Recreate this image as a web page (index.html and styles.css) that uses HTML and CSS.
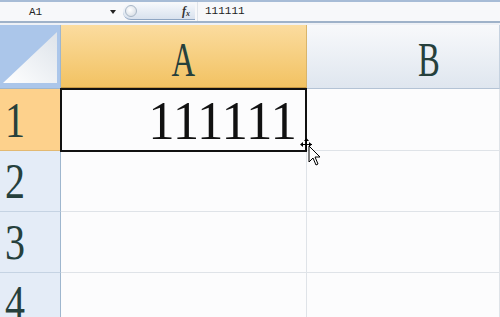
FILE: index.html
```html
<!DOCTYPE html>
<html>
<head>
<meta charset="utf-8">
<link rel="stylesheet" href="styles.css">
</head>
<body>
<div class="formula">
  <div class="namebox">A1</div>
  <div class="dd"></div>
  <div class="pill"><span class="knob"></span><span class="fx">f<sub>x</sub></span></div>
  <div class="ftext">111111</div>
</div>
<div class="gap"></div>
<div class="sheet">
  <div class="corner"><svg width="60" height="63" viewBox="0 0 60 63"><defs><linearGradient id="tg" x1="0" y1="1" x2="1" y2="0"><stop offset="0" stop-color="#ffffff"/><stop offset="1" stop-color="#dde3ea"/></linearGradient></defs><polygon points="3,58 57,7 57,58" fill="url(#tg)"/></svg></div>
  <div class="colh sel"><span>A</span></div>
  <div class="colh colb"><span>B</span></div>

  <div class="rowh sel"><span>1</span></div>
  <div class="cell active"><span>111111</span></div>
  <div class="cell"></div>

  <div class="rowh"><span>2</span></div>
  <div class="cell"></div>
  <div class="cell"></div>

  <div class="rowh"><span>3</span></div>
  <div class="cell"></div>
  <div class="cell"></div>

  <div class="rowh"><span>4</span></div>
  <div class="cell"></div>
  <div class="cell"></div>
</div>
<svg class="cursor" width="34" height="30" viewBox="0 0 34 30">
  <g fill="#000">
    <rect x="6" y="1" width="1" height="12"/>
    <rect x="1" y="6" width="11" height="1"/>
    <polygon points="6.5,0 4,3 9,3"/>
    <polygon points="0,6.5 3,4 3,9"/>
    <polygon points="12,6.5 9,4 9,9"/>
  </g>
  <polygon points="9,8 9,24 13,20 16,27 18,26 15,19 20,19" fill="#fff" stroke="#000" stroke-width="1"/>
</svg>
</body>
</html>
```
FILE: styles.css
```css
html, body { margin: 0; padding: 0; }
body {
  width: 500px; height: 317px; overflow: hidden; position: relative;
  background: #fdfdfd;
  font-family: "Liberation Serif", serif;
}
.formula {
  height: 19px;
  border-top: 2px solid #a7bcd6;
  border-bottom: 2px solid #9fb2c9;
  background: #f7f8fa;
  display: flex; align-items: center;
  font-family: "Liberation Mono", "DejaVu Sans Mono", monospace;
  font-size: 11px; color: #222;
}
.namebox { width: 108px; padding-left: 29px; box-sizing: border-box; }
.dd { width: 0; height: 0; border-left: 3px solid transparent; border-right: 3px solid transparent; border-top: 4px solid #222; margin-left: 2px; }
.pill {
  margin-left: 7px; width: 72px; height: 16px; box-sizing: border-box;
  border-radius: 8px 0 0 8px;
  background: linear-gradient(to bottom, #f4f7fb, #d9e2ee);
  border-bottom: 1px solid #8fa6c3;
  display: flex; align-items: center; justify-content: space-between;
  position: relative;
}
.knob { width: 12px; height: 12px; margin-left: 2px; border-radius: 50%; border: 1px solid #a8b6c6; background: radial-gradient(circle at 40% 40%, #fff, #cfd7e0); box-sizing: border-box; }
.fx { font-family: "Liberation Serif", serif; font-style: italic; font-weight: bold; font-size: 12px; color: #333; margin-right: 5px; }
.fx sub { font-size: 8px; vertical-align: -1px; }
.ftext { margin-left: 2px; border-left: 1px solid #dfe4ea; padding-left: 7px; height: 19px; line-height: 19px; }
.gap { height: 2px; background: #eef1f6; }
.sheet {
  display: grid;
  grid-template-columns: 61px 246px 193px;
  grid-template-rows: 64px 62px 61px 61px 61px;
}
.corner { background: #abc6ea; border-right: 1px solid #9eb6ce; border-bottom: 1px solid #9eb6ce; }
.corner svg { display: block; }
.colh {
  background: linear-gradient(to bottom, #f8f9fb, #dfe6ef);
  border-right: 1px solid #c6d2e0;
  border-bottom: 1px solid #b4c3d5;
  display: flex; align-items: center; justify-content: center;
  padding-top: 6px; box-sizing: border-box;
  font-size: 48px; color: #26403c;
}
.colh span { display: inline-block; transform: scaleX(0.68); }
.colh.sel { background: linear-gradient(to bottom, #fbdc9f, #f2c262); border-right-color: #d9b56b; border-bottom: 2px solid #c69743; }
.colh.colb { justify-content: flex-start; padding-left: 106px; }
.rowh {
  background: #e4ecf7;
  border-right: 1px solid #9eb6ce;
  border-bottom: 1px solid #c5d3e3;
  display: flex; align-items: center;
  padding-left: 5px;
  font-size: 50px; color: #26403c;
}
.rowh span { display: inline-block; transform: scaleX(0.8); transform-origin: left; }
.rowh.sel { background: #fdd18c; border-right-color: #d9b56b; border-bottom-color: #e2b972; }
.cell { border-right: 1px solid #dfe3e8; border-bottom: 1px solid #dfe3e8; background: #fcfcfd; }
.cell.active {
  border: 2px solid #111;
  margin: -1px 0 -1px -1px;
  display: flex; align-items: center; justify-content: flex-end;
  font-size: 55px; color: #111;
  padding-right: 8px;
  position: relative;
}
.cell.active span { display: inline-block; transform: scaleX(0.96); transform-origin: right; letter-spacing: 0; }
.cursor { position: absolute; left: 300px; top: 138px; }
```
